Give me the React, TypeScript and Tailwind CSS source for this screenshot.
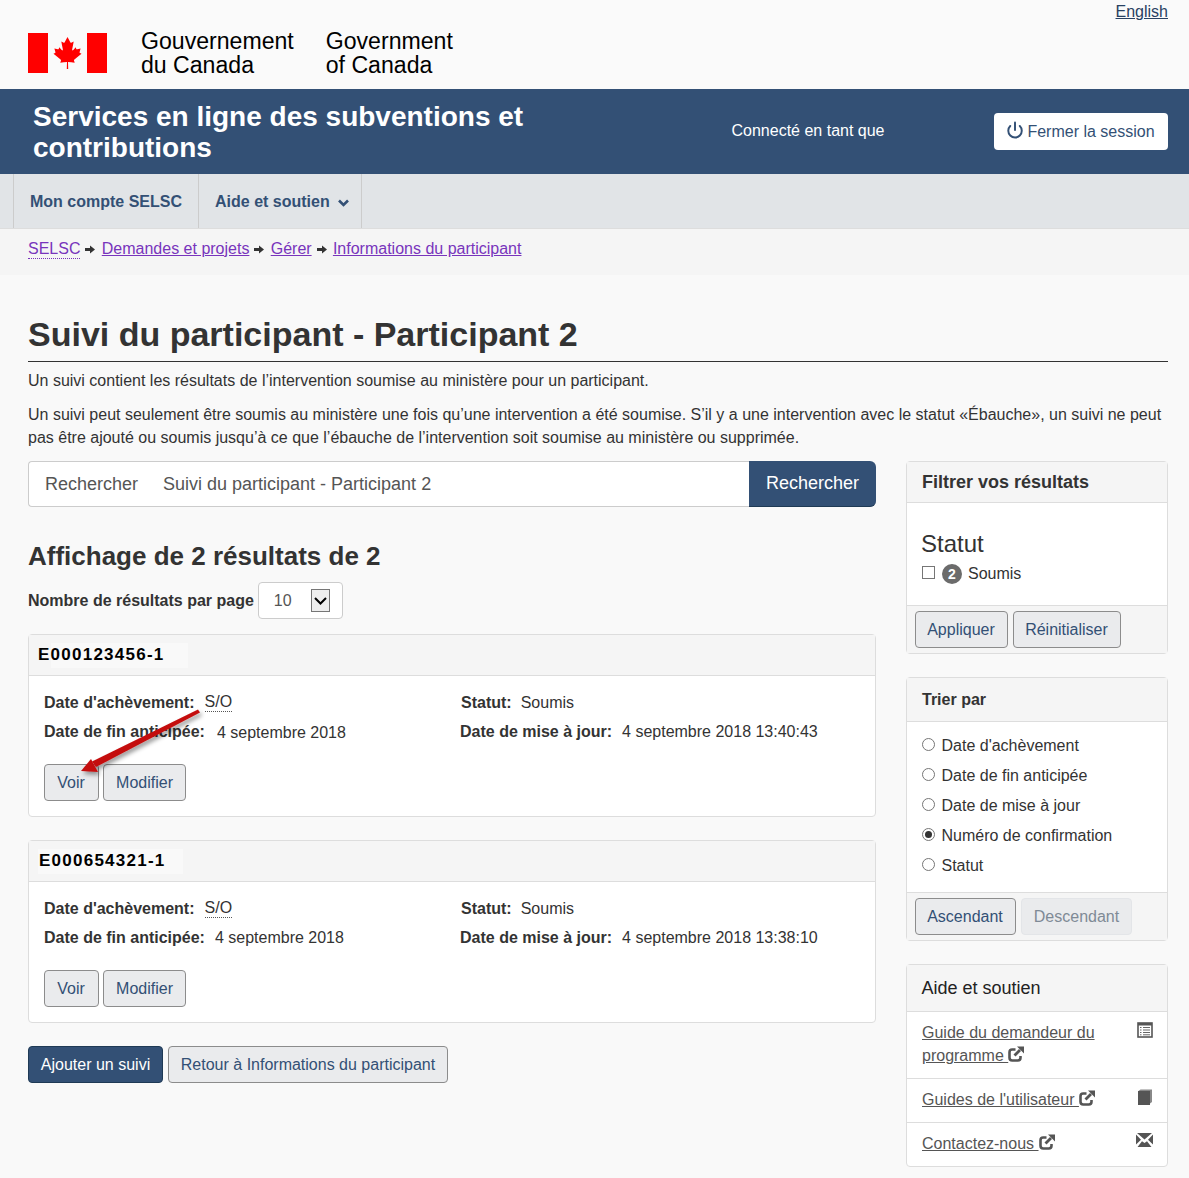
import { Power } from 'lucide-react'
import type { ReactNode } from 'react'

function Flag() {
  return (
    <svg width="79" height="40" viewBox="0 0 79 40">
      <rect x="0" y="0" width="20" height="40" fill="#f00" />
      <rect x="59" y="0" width="20" height="40" fill="#f00" />
      <path
        fill="#f00"
        d="M39.500 4 L36.700 9.200 C36.300 9.800 35.800 9.800 35.300 9.500 L33.300 8.400 L34.800 16.200 C35.100 17.600 34.200 17.600 33.700 17 L31.200 14.200 L30.800 15.700 C30.700 16.100 30.300 16.400 29.800 16.300 L26.400 15.600 L27.300 18.800 C27.500 19.500 27.600 19.800 27 20 L25.500 20.700 L32.600 26.500 C33 26.800 33.100 27.200 33 27.600 L32.300 29.700 C34.600 29.400 36.800 29.200 39 29 L38.800 36 L40.200 36 L40 29 C42.200 29.200 44.400 29.400 46.700 29.700 L46 27.600 C45.900 27.200 46 26.800 46.400 26.500 L53.500 20.700 L52 20 C51.400 19.800 51.500 19.500 51.700 18.800 L52.600 15.600 L49.200 16.300 C48.700 16.400 48.300 16.100 48.200 15.700 L47.800 14.200 L45.300 17 C44.800 17.600 43.900 17.600 44.200 16.200 L45.700 8.400 L43.700 9.500 C43.200 9.800 42.700 9.800 42.300 9.200 Z"
      />
    </svg>
  )
}

function ShareIcon() {
  return (
    <svg width="16" height="16" viewBox="0 0 16 16" className="inline-block align-[-1px]">
      <path
        d="M7.500 3.500 H4.200 C2.600 3.500 1.500 4.600 1.500 6.200 V11.800 C1.500 13.400 2.600 14.500 4.200 14.500 H9.800 C11.400 14.500 12.500 13.400 12.500 11.800 V10"
        fill="none"
        stroke="#555"
        strokeWidth="2.600"
      />
      <path d="M6.500 9.500 L12 4" fill="none" stroke="#555" strokeWidth="2.800" />
      <path d="M9 .5 H16 V7.500 Z" fill="#555" />
    </svg>
  )
}

function ListIcon() {
  return (
    <svg width="16" height="16" viewBox="0 0 16 16">
      <rect x="1" y="1" width="14" height="14" fill="#fff" stroke="#555" strokeWidth="1.600" />
      <rect x="1" y="1" width="14" height="2.500" fill="#555" />
      <path d="M3 5.500h1.500M6 5.500h7M3 8h1.500M6 8h7M3 10.500h1.500M6 10.500h7M3 12.800h1.500M6 12.800h7" stroke="#666" strokeWidth="1" />
    </svg>
  )
}

function BookIcon() {
  return (
    <svg width="16" height="16" viewBox="0 0 16 16">
      <path d="M1.500 2 L3.500 .5 H15 V13 L13 14.500 V2 Z" fill="#888" />
      <rect x="1" y="2" width="12" height="14" fill="#555" />
    </svg>
  )
}

function MailIcon() {
  return (
    <svg width="17" height="14" viewBox="0 0 17 14">
      <path d="M1 0 H16 L8.500 6.500 Z" fill="#555" />
      <path d="M0 1.500 L5 6.800 L0 11.500 Z M17 1.500 L12 6.800 L17 11.500 Z" fill="#555" />
      <path d="M1.500 14 L6 8.300 L8.500 10 L11 8.300 L15.500 14 Z" fill="#555" />
    </svg>
  )
}

function CrumbArrow() {
  return (
    <svg className="ml-[5px] mr-[6.300px]" width="10" height="9" viewBox="0 0 10 9">
      <path d="M0 3 H5 V.5 L10 4.500 L5 8.500 V6 H0 Z" fill="#333" />
    </svg>
  )
}

function Btn({ children, dark, disabled, className = '' }: { children: ReactNode; dark?: boolean; disabled?: boolean; className?: string }) {
  if (dark) {
    return (
      <span className={`flex h-[37px] items-center justify-center rounded-[4px] border border-[#1f3a55] bg-[#335075] text-white ${className}`}>
        {children}
      </span>
    )
  }
  if (disabled) {
    return (
      <span className={`flex h-[37px] items-center justify-center rounded-[4px] border border-[#e3e5e8] bg-[#eaebed] text-[#7f8a96] ${className}`}>
        {children}
      </span>
    )
  }
  return (
    <span className={`flex h-[37px] items-center justify-center rounded-[4px] border border-[#8c8c8c] bg-[#eaebed] text-[#335075] ${className}`}>
      {children}
    </span>
  )
}

function ResultCard({ head, id, idClass, fin, maj, finClass, headClass, arrow }: { head?: string; id: string; idClass: string; fin: string; maj: string; finClass: string; headClass: string; arrow?: boolean }) {
  return (
    <div className="relative h-[183px] rounded-[4px] border border-[#ddd] bg-white">
      <div className={`flex h-[41px] items-center border-b border-[#ddd] bg-[#f5f5f5] text-[17px] font-bold tracking-[1.250px] text-black ${headClass}`}>
        {head}
        <span className={`flex h-[25px] items-center bg-[#f9f9f9] ${idClass}`}>{id}</span>
      </div>
      <div className="grid grid-cols-[416px_1fr] pl-[15px] pt-[12px]">
        <div>
          <div className="flex h-[29px] items-center">
            <b>Date d'achèvement:</b>
            <span className="ml-[10px] border-b border-dotted border-[#555] leading-[18px]">S/O</span>
          </div>
          <div className="flex h-[29px] items-center">
            <b>Date de fin anticipée:</b>
            <span className={finClass}>{fin}</span>
          </div>
        </div>
        <div>
          <div className="flex h-[29px] items-center pl-px">
            <b>Statut:</b>
            <span className="ml-[9px]">Soumis</span>
          </div>
          <div className="flex h-[29px] items-center">
            <b>Date de mise à jour:</b>
            <span className="ml-[10px]">{maj}</span>
          </div>
        </div>
      </div>
      <div className="flex gap-1 pl-[15px] pt-[18px]">
        <Btn className="w-[55px] pr-px">Voir</Btn>
        <Btn className="w-[83px]">Modifier</Btn>
      </div>
      {arrow && (
        <svg className="absolute left-[40px] top-[64px]" width="180" height="90" viewBox="0 0 180 90">
          <defs>
            <filter id="arrow-shadow" x="-20%" y="-20%" width="140%" height="160%">
              <feDropShadow dx="2" dy="3" stdDeviation="2" floodColor="#000" floodOpacity="0.4" />
            </filter>
          </defs>
          <g filter="url(#arrow-shadow)" fill="#c40d0d">
            <path d="M129 10.500 L131 13.500 L27 68 L23 62.500 Z" />
            <path d="M12 72 L22 60 L29 73 Z" />
          </g>
        </svg>
      )}
    </div>
  )
}

function Radio({ label, checked }: { label: string; checked?: boolean }) {
  return (
    <div className="flex h-[30px] items-center">
      <span className="mr-[6.500px] mt-[-4px] flex h-[13px] w-[13px] items-center justify-center rounded-full border border-[#767676] bg-white">
        {checked && <span className="h-[7px] w-[7px] rounded-full bg-[#333]" />}
      </span>
      {label}
    </div>
  )
}

function HelpLink({ children, icon, className }: { children: ReactNode; icon: ReactNode; className: string }) {
  return (
    <div className={`flex justify-between border-t border-[#ddd] pl-[15px] pr-[14px] ${className}`}>
      <div className="w-[200px] leading-[23px] text-[#555]">{children}</div>
      <div className="pt-[1px]">{icon}</div>
    </div>
  )
}

export default function App() {
  return (
    <div className="h-[1178px] overflow-hidden bg-[#f9f9f9] font-['Liberation_Sans',Arial,sans-serif] text-[16px] text-[#333]">
      <header className="relative h-[89px] bg-[#fafafa]">
        <a className="absolute right-[21px] top-0 text-[#284162] underline">English</a>
        <div className="flex items-start pl-[28px] pt-[33px]">
          <Flag />
          <div className="ml-[34px] mt-[-4px] flex gap-[32px] text-[23.100px] leading-[24px] text-black">
            <div>
              Gouvernement
              <br />
              du Canada
            </div>
            <div>
              Government
              <br />
              of Canada
            </div>
          </div>
        </div>
      </header>

      <div className="flex h-[85px] items-center bg-[#335075] pl-[33px] pr-[21px] text-white">
        <div className="w-[620px] text-[28px] font-bold leading-[31px]">Services en ligne des subventions et contributions</div>
        <div className="ml-[78.500px] mt-[-1px]">Connecté en tant que</div>
        <div className="ml-auto flex h-[37px] w-[174px] items-center justify-center gap-[3px] rounded-[4px] bg-white pr-px text-[#335075]">
          <Power className="mt-[-3px]" size={18} strokeWidth={2.600} />
          Fermer la session
        </div>
      </div>

      <nav className="flex h-[55px] border-b border-[#ddd] bg-[#e1e4e7] pl-[13px] font-bold text-[#335075]">
        <div className="flex items-center border-x border-[#ccc] px-[16px] pt-[2px]">Mon compte SELSC</div>
        <div className="flex items-center border-r border-[#ccc] pl-[16px] pr-[12px] pt-[2px]">
          Aide et soutien
          <svg className="ml-[8px] mt-[2px]" width="11" height="8" viewBox="0 0 11 8">
            <path d="M1 1.500 L5.500 6 L10 1.500" fill="none" stroke="#335075" strokeWidth="2.600" />
          </svg>
        </div>
      </nav>

      <div className="flex h-[46px] items-center bg-[#f5f5f5] pb-[6px] pl-[28px]">
        <a className="border-b border-dotted border-[#7834bc] leading-[18px] text-[#7834bc]">SELSC</a>
        <CrumbArrow />
        <a className="text-[#7834bc] underline">Demandes et projets</a>
        <CrumbArrow />
        <a className="text-[#7834bc] underline">Gérer</a>
        <CrumbArrow />
        <a className="text-[#7834bc] underline">Informations du participant</a>
      </div>

      <main className="pl-[28px] pr-[21px]">
        <h1 className="mt-[38px] h-[49px] border-b border-[#333] text-[34px] font-bold leading-[44px]">
          <span className="block translate-y-[-1px]">Suivi du participant - Participant 2</span>
        </h1>
        <p className="mt-[7px] leading-[23px]">Un suivi contient les résultats de l’intervention soumise au ministère pour un participant.</p>
        <p className="mt-[11px] leading-[23px]">
          Un suivi peut seulement être soumis au ministère une fois qu’une intervention a été soumise. S’il y a une intervention avec le statut «Ébauche», un suivi ne peut pas être ajouté ou soumis jusqu’à ce que l’ébauche de l’intervention soit soumise au ministère ou supprimée.
        </p>

        <div className="mt-[12px] flex justify-between">
          <div className="w-[848px]">
            <div className="flex h-[46px] text-[18px]">
              <div className="flex flex-1 items-center rounded-l-[4px] border border-r-0 border-[#ccc] bg-white pl-[16px] text-[#555]">
                <span className="w-[118px]">Rechercher</span>
                Suivi du participant - Participant 2
              </div>
              <div className="flex w-[127px] items-center justify-center rounded-r-[6px] border-b border-[#1f3a55] bg-[#335075] text-white">Rechercher</div>
            </div>

            <h2 className="mt-[32px] text-[26px] font-bold leading-[34px]">Affichage de 2 résultats de 2</h2>
            <div className="mt-[9px] flex items-center">
              <b>Nombre de résultats par page</b>
              <div className="ml-[4px] flex h-[37px] w-[85px] items-center rounded-[4px] border border-[#ccc] bg-white pl-[15px] text-[#555]">
                10
                <span className="ml-[19px] flex h-[23px] w-[19px] items-center justify-center border border-[#767676] bg-[#eee]">
                  <svg width="13" height="8" viewBox="0 0 13 8">
                    <path d="M1 1 L6.500 6.500 L12 1" fill="none" stroke="#000" strokeWidth="2" />
                  </svg>
                </span>
              </div>
            </div>

            <div className="mt-[15px] flex flex-col gap-[23px]">
              <ResultCard head="E" id="000123456-1" idClass="pr-[23px]" headClass="pl-[9px]" fin="4 septembre 2018" finClass="ml-[12px] mt-[2px]" maj="4 septembre 2018 13:40:43" arrow />
              <ResultCard id="E000654321-1" idClass="pl-px pr-[17px]" headClass="pl-[9px]" fin="4 septembre 2018" finClass="ml-[10px]" maj="4 septembre 2018 13:38:10" />
            </div>

            <div className="mt-[23px] flex gap-[5px]">
              <Btn dark className="w-[135px]">Ajouter un suivi</Btn>
              <Btn className="w-[280px]">Retour à Informations du participant</Btn>
            </div>
          </div>

          <aside className="flex w-[262px] flex-col gap-[23px]">
            <div className="h-[193px] rounded-[4px] border border-[#ddd] bg-white">
              <div className="flex h-[41px] items-center border-b border-[#ddd] bg-[#f5f5f5] pl-[15px] text-[18px] font-bold">Filtrer vos résultats</div>
              <div className="h-[102px] pl-[15px]">
                <div className="ml-[-1px] pt-[27px] text-[24px] leading-[28px]">Statut</div>
                <div className="mt-[3px] flex h-[22px] items-start">
                  <span className="mt-[5px] h-[13px] w-[13px] border border-[#767676]" />
                  <span className="ml-[7px] mr-[6px] mt-[3px] flex h-[20px] w-[20px] items-center justify-center rounded-full bg-[#6b6b6b] text-[14px] font-bold text-white">2</span>
                  <span className="leading-[26px]">Soumis</span>
                </div>
              </div>
              <div className="flex h-[48px] gap-[5px] border-t border-[#ddd] bg-[#f5f5f5] pl-[8px] pt-[5px]">
                <Btn className="w-[93px] pr-px">Appliquer</Btn>
                <Btn className="w-[108px] pr-px">Réinitialiser</Btn>
              </div>
            </div>

            <div className="h-[264px] rounded-[4px] border border-[#ddd] bg-white">
              <div className="flex h-[44px] items-center border-b border-[#ddd] bg-[#f5f5f5] pl-[15px] font-bold">Trier par</div>
              <div className="h-[170px] pl-[15px] pt-[9px]">
                <Radio label="Date d'achèvement" />
                <Radio label="Date de fin anticipée" />
                <Radio label="Date de mise à jour" />
                <Radio label="Numéro de confirmation" checked />
                <Radio label="Statut" />
              </div>
              <div className="flex h-[48px] gap-[5px] border-t border-[#ddd] bg-[#f5f5f5] pl-[8px] pt-[5px]">
                <Btn className="w-[101px] pr-px">Ascendant</Btn>
                <Btn disabled className="w-[111px]">Descendant</Btn>
              </div>
            </div>

            <div className="h-[203px] rounded-[4px] border border-[#ddd] bg-white">
              <div className="flex h-[46px] items-center bg-[#f5f5f5] pl-[14.500px] pt-[1px] text-[18px] text-[#222]">Aide et soutien</div>
              <HelpLink icon={<ListIcon />} className="h-[67px] pt-[9px]">
                <span className="underline">Guide du demandeur du programme </span>
                <ShareIcon />
              </HelpLink>
              <HelpLink icon={<BookIcon />} className="h-[44px] pt-[9px]">
                <span className="whitespace-nowrap">
                  <span className="underline">Guides de l'utilisateur </span>
                  <ShareIcon />
                </span>
              </HelpLink>
              <HelpLink icon={<MailIcon />} className="h-[44px] pt-[9px]">
                <span className="underline">Contactez-nous </span>
                <ShareIcon />
              </HelpLink>
            </div>
          </aside>
        </div>
      </main>
    </div>
  )
}
